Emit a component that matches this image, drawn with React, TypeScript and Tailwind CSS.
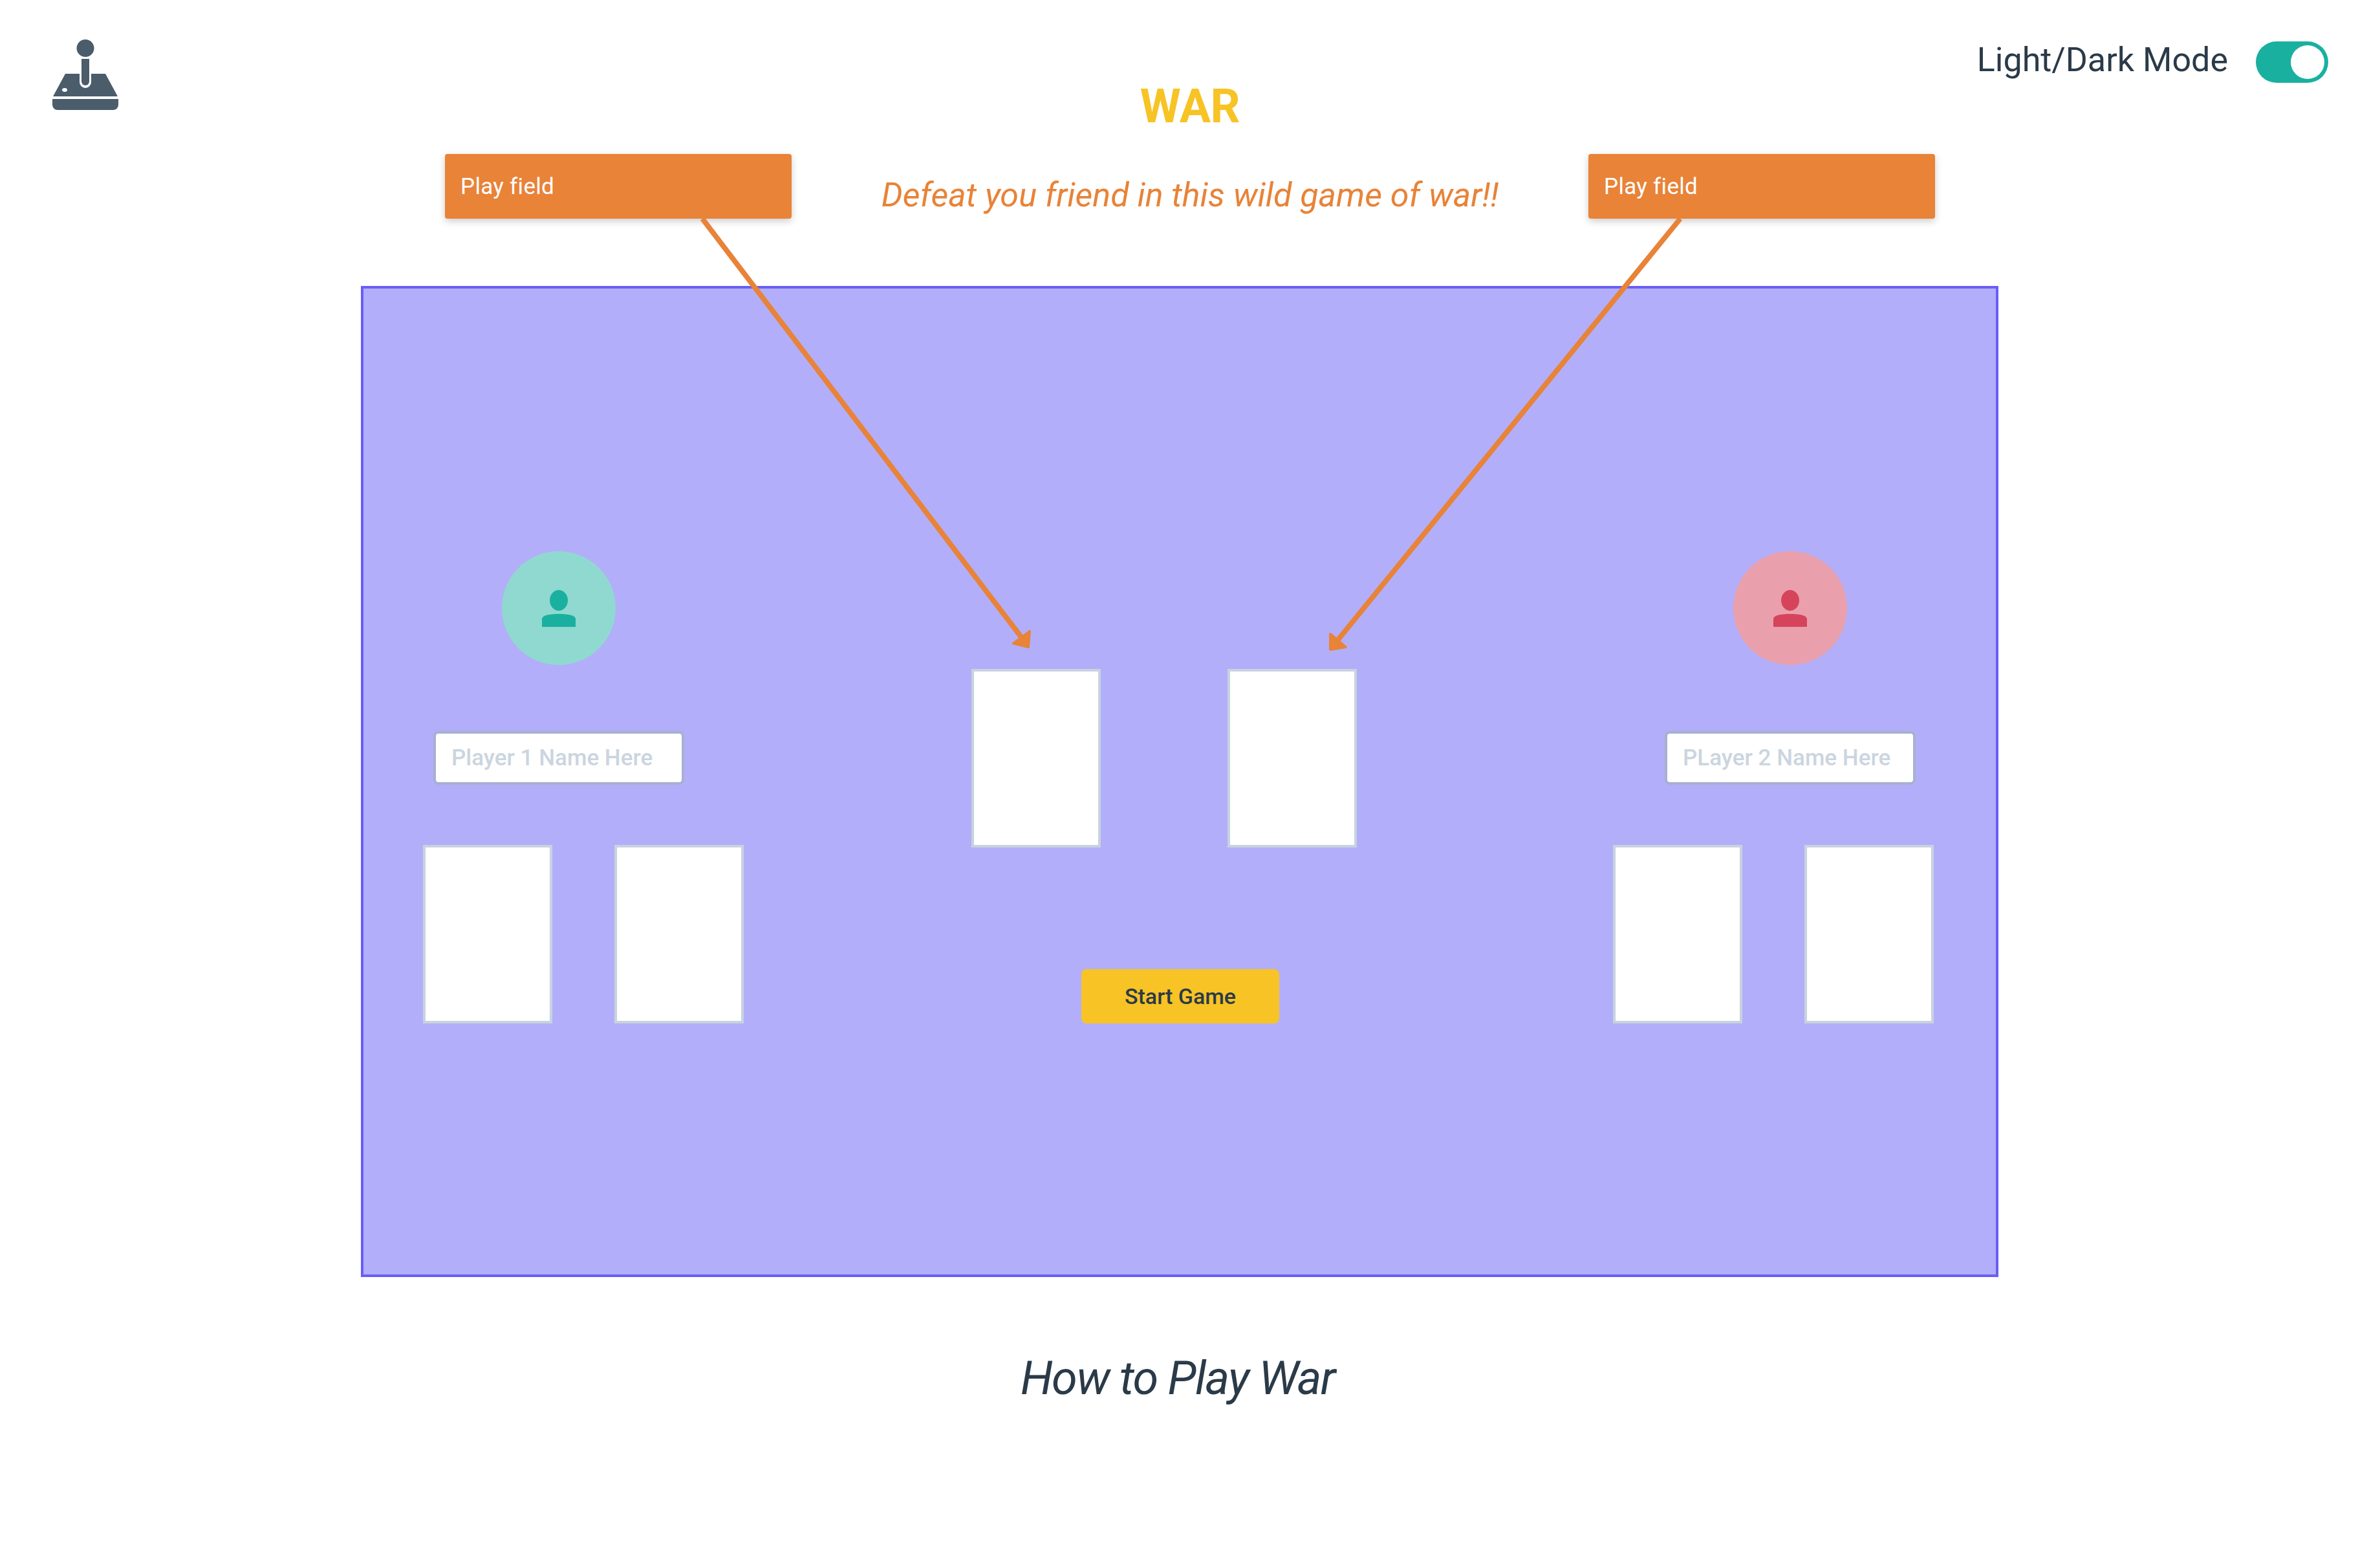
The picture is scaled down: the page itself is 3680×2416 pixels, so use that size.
function Joystick() {
  return (
    <svg width="102" height="110" viewBox="81 61 102 110" fill="#4b5c6b" className="block">
      <circle cx="132" cy="74.500" r="13.500" />
      <path d="M126 91h12v35a6 6 0 0 1-12 0z" />
      <path fillRule="evenodd" d="M101 114h22v13a9 9 0 0 0 18 0v-13h22l19 35H82zM100 136c-2.200 0-4 1.300-4 3s1.800 3 4 3 4-1.300 4-3-1.800-3-4-3z" />
      <path d="M81 153h102v9a8 8 0 0 1-8 8H89a8 8 0 0 1-8-8z" />
    </svg>
  );
}

function Person({ color }: { color: string }) {
  return (
    <svg width="52" height="57" viewBox="0 0 52 57" fill={color} className="block">
      <ellipse cx="26" cy="16" rx="14" ry="16" />
      <path d="M0 57V45c0-6 12-8 26-8s26 2 26 8v12z" />
    </svg>
  );
}

function Card() {
  return <div className="w-[200px] h-[276px] bg-white border-4 border-[#c8d3df]" />;
}

function Callout({ className }: { className: string }) {
  return (
    <div className={`absolute top-[238px] w-[536px] h-[100px] rounded bg-[#e88338] shadow-[0_4px_12px_rgba(0,0,0,0.2)] flex items-center pl-6 pt-[2px] text-white text-[35px] tracking-[0.3px] ${className}`}>
      Play field
    </div>
  );
}

export default function App() {
  return (
    <div className="relative w-[3680px] h-[2416px] bg-white font-['Roboto',sans-serif] text-[#2a3a48] overflow-hidden">
      <div className="grid grid-cols-3 h-[442px]">
        <div className="pl-[81px] pt-[61px]">
          <Joystick />
        </div>
        <div className="flex flex-col items-center pt-[123px]">
          <h1 className="text-[72px] leading-[84px] font-bold text-[#f7c325] tracking-[-0.5px]">WAR</h1>
          <p className="mt-[65px] text-[52px] leading-[60px] italic text-[#e88338]">
            Defeat you friend in this wild game of war!!
          </p>
        </div>
        <div className="flex justify-end items-start pt-[61px] pr-[80px]">
          <span className="text-[52px] leading-[64px] mr-[43px]">Light/Dark Mode</span>
          <div className="mt-[3px] w-[112px] h-[64px] rounded-full bg-[#1ab0a0] flex items-center justify-end pr-[6px]">
            <div className="w-[52px] h-[52px] rounded-full bg-white" />
          </div>
        </div>
      </div>

      <div className="flex items-start ml-[558px] w-[2532px] h-[1532px] bg-[#b3aef9] border-4 border-[#6a5ef5]">
        <div className="ml-[92px] mt-[406px] w-[496px] shrink-0">
          <div className="ml-[122px] w-[176px] h-[176px] rounded-full bg-[#90d9d0] flex items-center justify-center">
            <Person color="#1ab0a0" />
          </div>
          <input
            placeholder="Player 1 Name Here"
            className="block mt-[102px] ml-[16px] w-[388px] h-[83px] px-[24px] bg-white border-4 border-[#a8b0d2] rounded-lg text-[35px] font-medium placeholder:text-[#cbd5e0]"
          />
          <div className="flex gap-[96px] mt-[93px]">
            <Card />
            <Card />
          </div>
        </div>
        <div className="ml-[352px] mt-[588px] w-[596px] shrink-0">
          <div className="flex gap-[196px]">
            <Card />
            <Card />
          </div>
          <button className="block mt-[188px] ml-[170px] w-[306px] h-[84px] rounded-lg bg-[#f7c325] text-[34px] font-medium">
            Start Game
          </button>
        </div>
        <div className="ml-[396px] mt-[406px] w-[496px] shrink-0">
          <div className="ml-[186px] w-[176px] h-[176px] rounded-full bg-[#e9a0ac] flex items-center justify-center">
            <Person color="#d6445c" />
          </div>
          <input
            placeholder="PLayer 2 Name Here"
            className="block mt-[102px] ml-[80px] w-[388px] h-[83px] px-[24px] bg-white border-4 border-[#a8b0d2] rounded-lg text-[35px] font-medium placeholder:text-[#cbd5e0]"
          />
          <div className="flex gap-[96px] mt-[93px]">
            <Card />
            <Card />
          </div>
        </div>
      </div>

      <h2 className="mt-[115px] ml-[1578px] text-[72px] leading-[84px] italic tracking-[-1.7px]">How to Play War</h2>

      <Callout className="left-[688px]" />
      <Callout className="left-[2456px]" />
      <svg className="absolute inset-0 pointer-events-none" width="3680" height="2416" viewBox="0 0 3680 2416">
        <path d="M1086 338L1580 986M2598 338L2068 990" stroke="#e88338" strokeWidth="8" fill="none" />
        <path d="M1592 976L1567 994.500L1590 1000zM2057 980L2057 1004L2080.500 1000z" fill="#e88338" stroke="#e88338" strokeWidth="4" strokeLinejoin="round" />
      </svg>
    </div>
  );
}
